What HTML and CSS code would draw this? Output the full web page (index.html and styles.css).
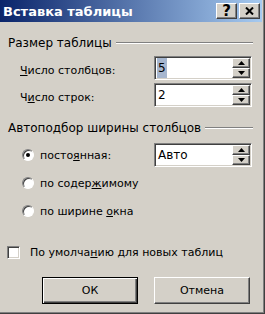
FILE: index.html
```html
<!DOCTYPE html>
<html lang="ru">
<head>
    <meta charset="UTF-8">
    <meta name="viewport" content="width=device-width, initial-scale=1.0">
    <title>Вставка таблицы</title>
    <link rel="stylesheet" href="styles.css">
</head>
<body>
    <div class="window">
        <div class="titlebar">
            <span class="title">Вставка таблицы</span>
            <div class="title-buttons">
                <span class="tbtn">?</span>
                <span class="tbtn">
                    <svg width="9" height="8" viewBox="0 0 9 8"><path d="M1 0.5 L8 7.5 M8 0.5 L1 7.5" stroke="#000" stroke-width="2"/></svg>
                </span>
            </div>
        </div>

        <div class="content">
            <div class="group-head">
                <span>Размер таблицы</span>
                <span class="etch"></span>
            </div>
            <div class="field-row first">
                <label class="field-label"><u>Ч</u>исло столбцов:</label>
                <div class="spin">
                    <span class="spin-value"><span class="selected">5</span></span>
                    <span class="spin-buttons">
                        <span class="spin-btn"><svg width="7" height="4" viewBox="0 0 7 4"><path d="M3.5 0 L7 4 L0 4 Z" fill="#000"/></svg></span>
                        <span class="spin-btn"><svg width="7" height="4" viewBox="0 0 7 4"><path d="M0 0 L7 0 L3.5 4 Z" fill="#000"/></svg></span>
                    </span>
                </div>
            </div>
            <div class="field-row">
                <label class="field-label">Ч<u>и</u>сло строк:</label>
                <div class="spin">
                    <span class="spin-value">2</span>
                    <span class="spin-buttons">
                        <span class="spin-btn"><svg width="7" height="4" viewBox="0 0 7 4"><path d="M3.5 0 L7 4 L0 4 Z" fill="#000"/></svg></span>
                        <span class="spin-btn"><svg width="7" height="4" viewBox="0 0 7 4"><path d="M0 0 L7 0 L3.5 4 Z" fill="#000"/></svg></span>
                    </span>
                </div>
            </div>

            <div class="group-head second">
                <span>Автоподбор ширины столбцов</span>
                <span class="etch"></span>
            </div>
            <div class="radio-list">
                <div class="radio-row">
                    <span class="radio checked"></span>
                    <span class="radio-text">посто<u>я</u>нная:</span>
                    <div class="spin">
                        <span class="spin-value">Авто</span>
                        <span class="spin-buttons">
                            <span class="spin-btn"><svg width="7" height="4" viewBox="0 0 7 4"><path d="M3.5 0 L7 4 L0 4 Z" fill="#000"/></svg></span>
                            <span class="spin-btn"><svg width="7" height="4" viewBox="0 0 7 4"><path d="M0 0 L7 0 L3.5 4 Z" fill="#000"/></svg></span>
                        </span>
                    </div>
                </div>
                <div class="radio-row">
                    <span class="radio"></span>
                    <span class="radio-text">по содер<u>ж</u>имому</span>
                </div>
                <div class="radio-row">
                    <span class="radio"></span>
                    <span class="radio-text">по ширине <u>о</u>кна</span>
                </div>
            </div>

            <div class="check-row">
                <span class="checkbox"></span>
                <span>По умолча<u>н</u>ию для новых таблиц</span>
            </div>

            <div class="button-row">
                <button class="btn default">ОК</button>
                <button class="btn">Отмена</button>
            </div>
        </div>
    </div>
</body>
</html>
```

FILE: styles.css
```css
body {
    margin: 0;
    background-color: #d4d0c8;
    font-family: "DejaVu Sans", sans-serif;
    font-size: 11px;
    color: #000;
}
.window {
    width: 265px;
    height: 314px;
    box-sizing: border-box;
    overflow: hidden;
    background-color: #d4d0c8;
    border-right: 1px solid #404040;
    border-bottom: 1px solid #404040;
    box-shadow: inset -1px -1px 0 #808080;
    padding-right: 2px;
}
.titlebar {
    height: 22px;
    display: flex;
    align-items: center;
    justify-content: space-between;
    padding: 0 2px 0 3px;
    background: linear-gradient(to right, #0a246a, #a6caf0);
}
.title {
    color: #fff;
    font-weight: bold;
    font-size: 13px;
}
.title-buttons {
    display: flex;
    gap: 2px;
}
.tbtn {
    width: 21px;
    height: 16px;
    box-sizing: border-box;
    display: flex;
    align-items: center;
    justify-content: center;
    background-color: #d4d0c8;
    border-top: 1px solid #fff;
    border-left: 1px solid #fff;
    border-right: 1px solid #404040;
    border-bottom: 1px solid #404040;
    box-shadow: inset -1px -1px 0 #808080;
    font-weight: bold;
    font-size: 15px;
    line-height: 14px;
}
.content {
    padding: 14px 9px 0 8px;
}
.group-head {
    display: flex;
    align-items: center;
    gap: 4px;
    height: 14px;
    line-height: 14px;
    font-size: 12px;
}
.group-head.second {
    margin-top: 14px;
}
.etch {
    flex: 1;
    border-top: 1px solid #808080;
    border-bottom: 1px solid #fff;
}
.field-row {
    display: flex;
    align-items: center;
    padding-left: 12px;
    margin-top: 3px;
}
.field-row.first {
    margin-top: 6px;
}
.field-label {
    width: 134px;
    padding-top: 4px;
}
.spin {
    width: 98px;
    height: 24px;
    box-sizing: border-box;
    display: flex;
    background-color: #fff;
    border-top: 1px solid #808080;
    border-left: 1px solid #808080;
    border-right: 1px solid #fff;
    border-bottom: 1px solid #fff;
    box-shadow: inset 1px 1px 0 #404040, inset -1px -1px 0 #d4d0c8;
    padding: 1px;
}
.spin-value {
    flex: 1;
    padding-left: 2px;
    display: flex;
    align-items: center;
    font-size: 12px;
}
.selected {
    background-color: #a6b6cf;
    line-height: 20px;
    padding: 0 1px;
    margin-left: -1px;
}
.spin-buttons {
    width: 18px;
    display: flex;
    flex-direction: column;
}
.spin-btn {
    flex: 1;
    box-sizing: border-box;
    display: flex;
    align-items: center;
    justify-content: center;
    background-color: #d4d0c8;
    border-top: 1px solid #fff;
    border-left: 1px solid #fff;
    border-right: 1px solid #404040;
    border-bottom: 1px solid #404040;
    box-shadow: inset -1px -1px 0 #808080;
}
.radio-list {
    display: flex;
    flex-direction: column;
    gap: 4px;
    margin-top: 8px;
}
.radio-row {
    height: 24px;
    display: flex;
    align-items: center;
    padding-left: 14px;
}
.radio {
    width: 12px;
    height: 12px;
    box-sizing: border-box;
    border-radius: 50%;
    background-color: #fff;
    border: 1px solid;
    border-color: #808080 #fff #fff #808080;
    box-shadow: inset 1px 1px 0 #404040;
    margin-right: 6px;
    display: flex;
    align-items: center;
    justify-content: center;
}
.radio.checked::after {
    content: "";
    width: 4px;
    height: 4px;
    border-radius: 50%;
    background-color: #000;
}
.radio-text {
    width: 114px;
}
.check-row {
    display: flex;
    align-items: center;
    gap: 10px;
    margin-top: 22px;
    margin-left: -1px;
    height: 14px;
}
.checkbox {
    width: 13px;
    height: 13px;
    box-sizing: border-box;
    background-color: #fff;
    border-top: 1px solid #808080;
    border-left: 1px solid #808080;
    border-right: 1px solid #fff;
    border-bottom: 1px solid #fff;
    box-shadow: inset 1px 1px 0 #404040, inset -1px -1px 0 #d4d0c8;
}
.button-row {
    display: flex;
    gap: 16px;
    padding-left: 34px;
    margin-top: 18px;
}
.btn {
    width: 96px;
    height: 27px;
    font-family: "DejaVu Sans", sans-serif;
    font-size: 11px;
    color: #000;
    background-color: #d4d0c8;
    border-top: 1px solid #fff;
    border-left: 1px solid #fff;
    border-right: 1px solid #404040;
    border-bottom: 1px solid #404040;
    box-shadow: inset -1px -1px 0 #808080;
    padding: 0;
}
.btn.default {
    border: 1px solid #000;
    box-shadow: inset 1px 1px 0 #fff, inset -1px -1px 0 #404040, inset -2px -2px 0 #808080;
}
```
